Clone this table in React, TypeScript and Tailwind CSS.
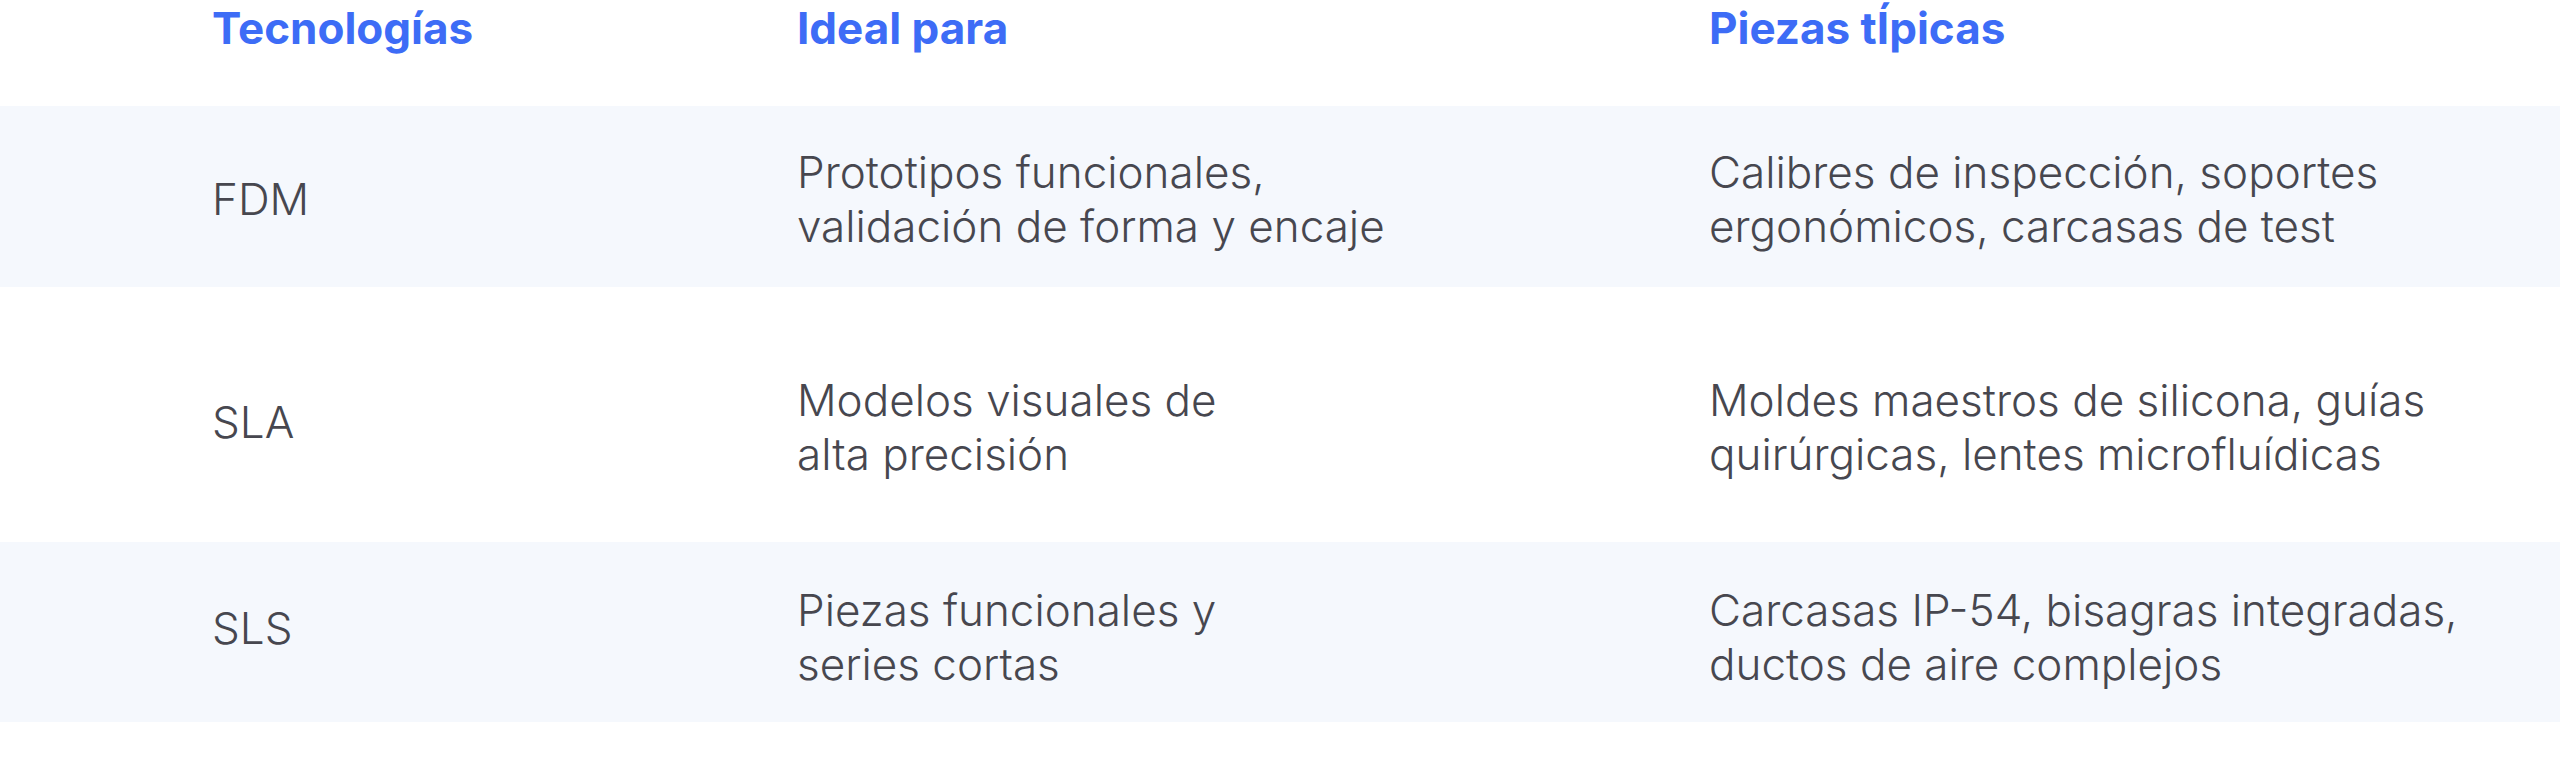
const rows = [
  {
    tech: 'FDM',
    ideal: ['Prototipos funcionales,', 'validación de forma y encaje'],
    piezas: ['Calibres de inspección, soportes', 'ergonómicos, carcasas de test'],
    row: 'bg-[#f5f8fd] h-[181px] pt-[5px]',
    techPad: '',
    textPad: '',
  },
  {
    tech: 'SLA',
    ideal: ['Modelos visuales de', 'alta precisión'],
    piezas: ['Moldes maestros de silicona, guías', 'quirúrgicas, lentes microfluídicas'],
    row: 'bg-white h-[255px] pt-[14px]',
    techPad: '',
    textPad: 'pt-[10px]',
  },
  {
    tech: 'SLS',
    ideal: ['Piezas funcionales y', 'series cortas'],
    piezas: ['Carcasas IP-54, bisagras integradas,', 'ductos de aire complejos'],
    row: 'bg-[#f5f8fd] h-[180px]',
    techPad: 'pb-[8px]',
    textPad: 'pt-[10px]',
  },
]

function Lines({ lines, pad }: { lines: string[]; pad: string }) {
  return (
    <div className={`text-[44px] leading-[54px] whitespace-nowrap ${pad}`}>
      {lines.map((l) => (
        <div key={l}>{l}</div>
      ))}
    </div>
  )
}

export default function App() {
  return (
    <div className="w-[2560px] h-[782px] bg-white font-['Inter','Noto_Sans',sans-serif] text-[#47474f] font-[350] overflow-hidden">
      <div className="grid grid-cols-[585px_912px_1fr] pl-[212px] h-[106px] pt-[6px] text-[44px] leading-none font-bold text-[#3d6cf6]">
        <div>Tecnologías</div>
        <div>Ideal para</div>
        <div>Piezas tÍpicas</div>
      </div>

      {rows.map((r) => (
        <div key={r.tech} className={`grid grid-cols-[585px_912px_1fr] items-center pl-[212px] ${r.row}`}>
          <div className={`text-[44px] leading-[54px] ${r.techPad}`}>{r.tech}</div>
          <Lines lines={r.ideal} pad={r.textPad} />
          <Lines lines={r.piezas} pad={r.textPad} />
        </div>
      ))}
    </div>
  )
}
